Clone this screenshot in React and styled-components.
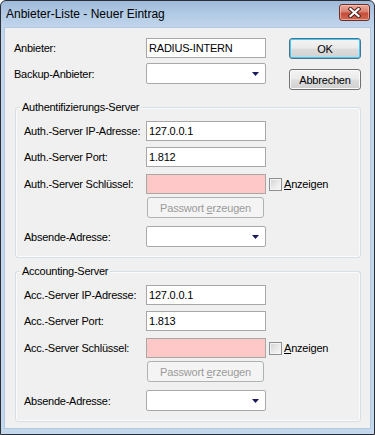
import React from 'react';
import styled, { createGlobalStyle } from 'styled-components';

const GlobalStyle = createGlobalStyle`
  html, body {
    margin: 0;
    padding: 0;
    background: #ffffff;
  }
  body {
    font-family: "Liberation Sans", Arial, sans-serif;
  }
  * {
    box-sizing: border-box;
  }
`;

const Window = styled.div`
  width: 375px;
  height: 435px;
  border: 1px solid #2b2f35;
  border-radius: 6px 6px 0 0;
  background: linear-gradient(to bottom, #9fbad9 0, #b3cbe6 14px, #c2d6ec 27px, #c4d8ed 100%);
  display: flex;
  flex-direction: column;
  padding: 0 3px 5px 3px;
`;

const TitleBar = styled.div`
  height: 26px;
  display: flex;
  align-items: flex-start;
  padding-left: 2px;
`;

const TitleText = styled.span`
  font-size: 12px;
  line-height: 26px;
  color: #000000;
`;

const CloseButton = styled.div`
  margin: 3px 1px 0 auto;
  width: 31px;
  height: 17px;
  border: 1px solid #6e2f27;
  border-radius: 3px;
  background: linear-gradient(to bottom, #e9a99b 0%, #d9806f 45%, #c64c3a 55%, #cf6a4f 100%);
  box-shadow: inset 0 0 0 1px rgba(255, 210, 200, 0.55);
  display: flex;
  align-items: center;
  justify-content: center;
`;

const Client = styled.div`
  flex: 1;
  background: #f0f0f0;
  border: 1px solid #b3c7de;
  display: flex;
  flex-direction: column;
`;

const TopSection = styled.div`
  display: flex;
  align-items: flex-start;
  padding: 10px 0 0 9px;
`;

const FormGrid = styled.div`
  display: grid;
  grid-template-columns: 132px 120px;
  grid-template-rows: 20px 21px;
  row-gap: 5px;
  align-items: center;
`;

const ButtonColumn = styled.div`
  display: flex;
  flex-direction: column;
  gap: 10px;
  margin-left: 23px;
`;

const Label = styled.span`
  font-size: 11px;
  letter-spacing: -0.25px;
  color: #000000;
  white-space: nowrap;
`;

const TextField = styled.input`
  width: 120px;
  height: 20px;
  margin: 0;
  padding: 0 0 0 2px;
  border: 1px solid #a7a7a7;
  border-radius: 0;
  background: ${(p) => (p.$invalid ? '#ffc8c8' : '#ffffff')};
  font-family: "Liberation Sans", Arial, sans-serif;
  font-size: 11px;
  letter-spacing: -0.2px;
  color: #000000;
  outline: none;
`;

const Select = styled.div`
  width: 120px;
  height: 21px;
  border: 1px solid #a9a9a9;
  border-radius: 2px;
  background: #ffffff;
  display: flex;
  align-items: center;
  justify-content: flex-end;
  padding-right: 6px;
`;

const PushButton = styled.button`
  width: ${(p) => p.$width || 72}px;
  height: 21px;
  margin: 0;
  padding: 0;
  border: 1px solid ${(p) => (p.$default ? '#4d7290' : '#707070')};
  border-radius: 3px;
  background: linear-gradient(to bottom, #f3f3f3 0%, #ebebeb 48%, #dddddd 52%, #d0d0d0 100%);
  box-shadow: inset 0 0 0 1px ${(p) => (p.$default ? '#40cbf5' : '#fbfbfb')};
  font-family: "Liberation Sans", Arial, sans-serif;
  font-size: 11px;
  letter-spacing: -0.2px;
  color: #000000;

  &:disabled {
    border-color: #adb2b5;
    background: #f4f4f4;
    box-shadow: none;
    color: #9b9b9b;
  }
`;

const Group = styled.div`
  position: relative;
  width: 346px;
  margin: ${(p) => p.$top}px 0 0 10px;
  border: 1px solid #d5dfe5;
  border-radius: 3px;
  box-shadow: inset 0 0 0 1px #fbfbfb;
  padding: 13px 0 10px 8px;
`;

const Legend = styled.span`
  position: absolute;
  top: -7px;
  left: 4px;
  padding: 0 2px;
  background: #f0f0f0;
  font-size: 11px;
  line-height: 13px;
  letter-spacing: -0.25px;
  color: #000000;
`;

const Row = styled.div`
  display: grid;
  grid-template-columns: 122px 120px auto;
  align-items: center;
  height: ${(p) => p.$height || 20}px;
  margin-top: ${(p) => p.$gap || 0}px;
`;

const CheckWrap = styled.label`
  display: flex;
  align-items: center;
  margin-left: 3px;
  font-size: 11px;
  letter-spacing: -0.2px;
  color: #000000;
`;

const CheckBox = styled.span`
  width: 13px;
  height: 13px;
  margin-right: 2px;
  border: 1px solid #8f8f8f;
  background: linear-gradient(135deg, #d2d2d2 0%, #ececec 60%, #f7f7f7 100%);
  box-shadow: inset 0 0 0 1px #f4f4f4;
`;

const GenerateButton = styled(PushButton)`
  grid-column: 2;
  margin-left: 1px;
`;

const Arrow = () => (
  <svg width="7" height="4" viewBox="0 0 7 4">
    <polygon points="0,0 7,0 3.5,4" fill="#1a1a5c" />
  </svg>
);

const CloseGlyph = () => (
  <svg width="13" height="11" viewBox="0 0 13 11">
    <path d="M2.5 2 L10.5 9 M10.5 2 L2.5 9" stroke="#4a1d17" strokeWidth="4" strokeLinecap="square" />
    <path d="M2.5 2 L10.5 9 M10.5 2 L2.5 9" stroke="#ffffff" strokeWidth="2.2" strokeLinecap="square" />
  </svg>
);

const ServerGroup = ({ title, prefix, ip, port, top }) => (
  <Group $top={top}>
    <Legend>{title}</Legend>
    <Row>
      <Label>{prefix}-Server IP-Adresse:</Label>
      <TextField readOnly value={ip} />
    </Row>
    <Row $gap={6}>
      <Label>{prefix}-Server Port:</Label>
      <TextField readOnly value={port} />
    </Row>
    <Row $gap={7}>
      <Label>{prefix}-Server Schlüssel:</Label>
      <TextField readOnly value="" $invalid />
      <CheckWrap>
        <CheckBox />
        <span><u>A</u>nzeigen</span>
      </CheckWrap>
    </Row>
    <Row $gap={3} $height={21}>
      <GenerateButton disabled $width={117}>
        Passwort <u>e</u>rzeugen
      </GenerateButton>
    </Row>
    <Row $gap={8} $height={21}>
      <Label>Absende-Adresse:</Label>
      <Select>
        <Arrow />
      </Select>
    </Row>
  </Group>
);

export default function App() {
  return (
    <>
      <GlobalStyle />
      <Window>
        <TitleBar>
          <TitleText>Anbieter-Liste - Neuer Eintrag</TitleText>
          <CloseButton>
            <CloseGlyph />
          </CloseButton>
        </TitleBar>
        <Client>
          <TopSection>
            <FormGrid>
              <Label>Anbieter:</Label>
              <TextField readOnly value="RADIUS-INTERN" />
              <Label>Backup-Anbieter:</Label>
              <Select>
                <Arrow />
              </Select>
            </FormGrid>
            <ButtonColumn>
              <PushButton $default>OK</PushButton>
              <PushButton>Abbrechen</PushButton>
            </ButtonColumn>
          </TopSection>
          <ServerGroup
            top={17}
            title="Authentifizierungs-Server"
            prefix="Auth."
            ip="127.0.0.1"
            port="1.812"
          />
          <ServerGroup
            top={13}
            title="Accounting-Server"
            prefix="Acc."
            ip="127.0.0.1"
            port="1.813"
          />
        </Client>
      </Window>
    </>
  );
}
